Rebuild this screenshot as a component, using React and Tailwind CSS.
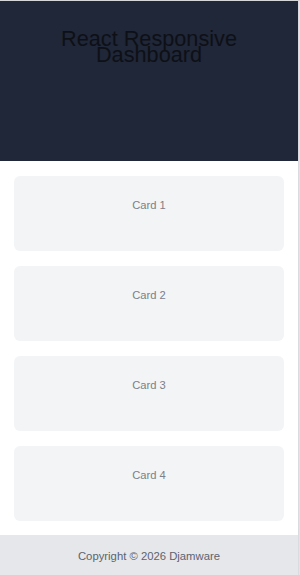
import React from "react";

const cards = ["Card 1", "Card 2", "Card 3", "Card 4"];

const App = () => {
  return (
    <div
      className="flex w-[300px] h-[575px] border-t border-[#d4d6da] bg-white overflow-hidden"
      style={{ fontFamily: '"Liberation Sans", Arial, sans-serif' }}
    >
      <div className="flex flex-col w-[298px]">
        <header className="h-[160px] bg-[#1f2738] pt-[30px] text-center">
          <h1 className="text-[21.7px] leading-[15.7px] text-[#0e1016] font-normal">
            React Responsive
            <br />
            Dashboard
          </h1>
        </header>

        <main className="flex flex-col gap-[15px] px-[14px] pt-[15px] pb-[14px]">
          {cards.map(card => (
            <div
              key={card}
              className="h-[75px] rounded-md bg-gray-100 pt-[22px] text-center text-[11.2px] leading-[14px] text-[#7b808a]"
            >
              {card}
            </div>
          ))}
        </main>

        <footer className="h-[40px] bg-gray-200 flex items-center justify-center text-[11.3px] text-[#5d636f] pt-[3px]">
          Copyright © 2026 Djamware
        </footer>
      </div>
      <div className="w-[2px] bg-[#e2e4e8] border-l border-[#d9dbe0]"></div>
    </div>
  );
};

export default App;
